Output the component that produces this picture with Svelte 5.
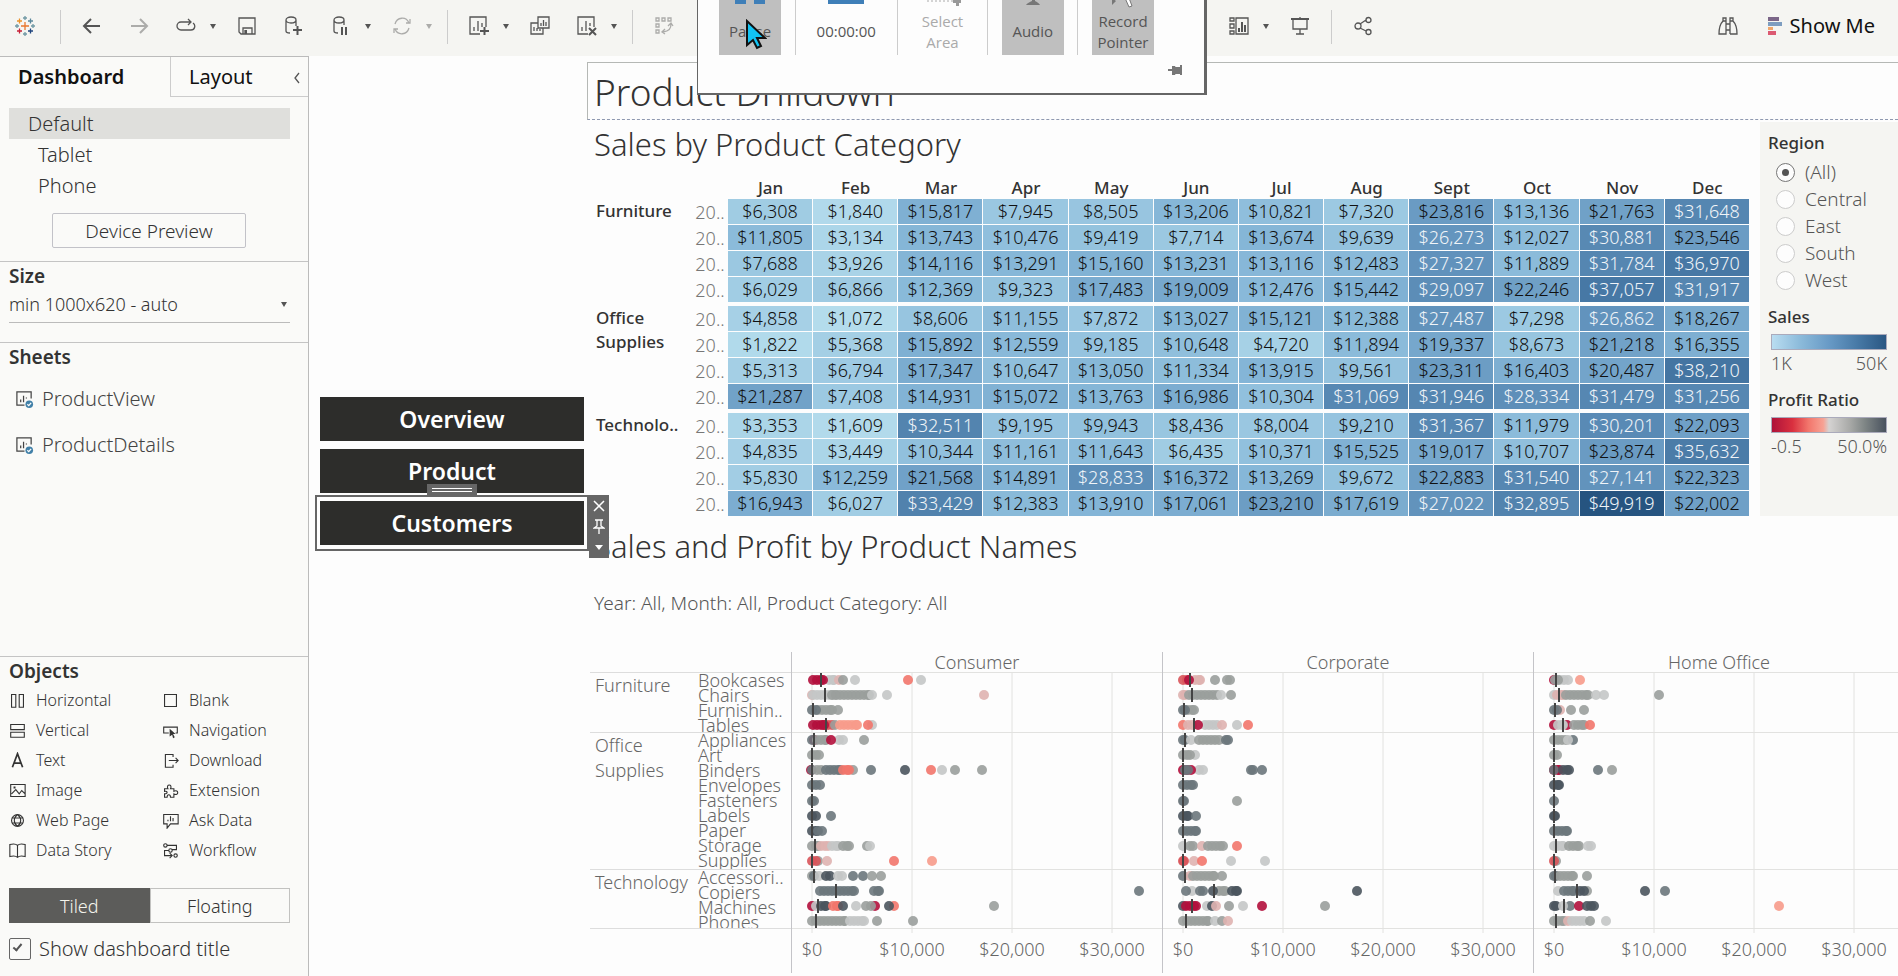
<script lang="ts">
  type Shape = { d: string; kind?: "solid" | "heavy"; fill?: string };
  type Tone = "crimson" | "red" | "coral" | "salmon" | "pink" | "silver" | "gray" | "slate" | "dark";
  type Run = [Tone, number, number?];
  interface Row { median: number; runs: Run[] }

  const icons: Record<string, Shape[]> = {
    logo: [
      { d: "M10 6v8M6 10h8", fill: "#e8762d" },
      { d: "M4.500 2.500v5M2 5h5", fill: "#eb9129" },
      { d: "M15.500 2.500v5M13 5h5", fill: "#5b879b" },
      { d: "M4.500 12.500v5M2 15h5", fill: "#c72037" },
      { d: "M15.500 12.500v5M13 15h5", fill: "#1f447e" },
      { d: "M10 0v4M8 2h4M10 16v4M8 18h4M0 10h4M2 8v4M16 10h4M18 8v4", fill: "#7099a5" },
    ],
    back: [{ d: "M9 3L2 10l7 7M2 10h16", kind: "heavy" }],
    forward: [{ d: "M11 3l7 7-7 7M18 10H2", kind: "heavy" }],
    redo: [{ d: "M15 14H5a4 4 0 0 1 0-8h10M12 3l3 3-3 3M17 7c3 2 2 7-2 7" }],
    save: [{ d: "M2 2h16v16H4l-2-2zM6 18v-6h9v6M8 14v4" }, { d: "M8 14h2v4H8z", kind: "solid" }],
    dbAdd: [{ d: "M2 4c0-4 10-4 10 0s-10 4-10 0v11c0 2 2 2 4 2M12 4v6" }, { d: "M9 14h9M13.500 10v9", kind: "heavy" }],
    dbPause: [{ d: "M3 4c0-4 10-4 10 0s-10 4-10 0v11c0 2 2 2 4 2M13 4v5" }, { d: "M10 11h2v8h-2zM14 11h2v8h-2z", kind: "solid" }],
    refresh: [{ d: "M3 8c2-7 11-8 14-1M17 12c-2 7-11 8-14 1M14 7h4V3M6 13H2v4" }],
    sheetAdd: [{ d: "M11 18H1V1h16v10M5 15v-4M9 15V5M13 11V7" }, { d: "M11 15h9M15.500 11v8", kind: "heavy" }],
    sheetCopy: [{ d: "M8 1h11v11H8zM11 10V7M13.500 10V4M16 10V6M8 7H1v11h12v-6M4 15v-4M7 15v-3M10 15v-2" }],
    sheetClear: [{ d: "M11 18H1V1h16v10M5 15v-4M9 15V5M13 10V7" }, { d: "M12 12l7 7M19 12l-7 7", kind: "heavy" }],
    swap: [{ d: "M2 2h3v3H2zM8 2h3v3H8zM14 2h3v3h-3zM2 8h3v3H2zM2 14h3v3H2zM17 8c0 5-2 7-8 8M14 10l3-3 2 3M11 13l-3 3 3 2" }],
    cards: [{ d: "M1 2h4v3H1zM1 8h4v4H1zM1 15h4v3H1zM7 2h12v16H7z" }, { d: "M9 12h2v4H9zM12 6h2v10h-2zM15 9h2v7h-2z", kind: "solid" }],
    present: [{ d: "M1 3h18M3 3v10h14V3M10 13v5M6 18h8M10 1v2" }, { d: "M1 2h18v2H1z", kind: "solid" }],
    share: [{ d: "M13 4a2.500 2.500 0 1 0 5 0a2.500 2.500 0 1 0-5 0M2 10a3 3 0 1 0 6 0a3 3 0 1 0-6 0M13 16a2.500 2.500 0 1 0 5 0a2.500 2.500 0 1 0-5 0M7 8l6-4M7 12l6 3" }],
    find: [{ d: "M5 5V2h3v16H1c0-5 1-10 4-13M12 18V2h3v3c3 3 4 8 4 13h-7M8 8h4M8 14h4M5 5h3M12 5h3" }],
    sheet: [{ d: "M10 16H2V2h15v7M6 13v-3M9 13V6M12 9V8" }, { d: "M11 15a4 4 0 1 0 8 0a4 4 0 1 0-8 0", kind: "solid", fill: "#4180a8" }, { d: "M13 15l1.500 1.500 2.500-3", fill: "#fff" }],
    Horizontal: [{ d: "M3 3h5v15H3zM12 3h5v15h-5z" }],
    Vertical: [{ d: "M2 3h16v6H2zM2 12h16v6H2z" }],
    Text: [{ d: "M4 18L10 2l6 16M6 13h8", kind: "heavy" }],
    Image: [{ d: "M2 3h17v14H2zM3 14l5-5 4 5 3-4 4 4M6 6h1v1H6z" }],
    "Web Page": [{ d: "M3 10a7 7 0 1 0 14 0a7 7 0 1 0-14 0M3 7h14M3 13h14M10 3c-5 4-5 10 0 14M10 3c5 4 5 10 0 14" }],
    "Data Story": [{ d: "M1 3c4-1 7-1 9 1 2-2 5-2 9-1v14c-4-1-7-1-9 1-2-2-5-2-9-1zM10 4v14" }],
    Blank: [{ d: "M3 3h14v14H3z" }],
    Navigation: [{ d: "M8 13H2V6h16v7h-2" }, { d: "M9 8l7 6-3 0 2 4-2 1-1-4-3 2z", kind: "solid" }],
    Download: [{ d: "M13 6V3H4v15h9v-3M8 10h11M16 7l3 3-3 3" }],
    Extension: [{ d: "M3 8h4c-3-6 6-6 3 0h4v3c6-3 6 6 0 3v4h-4c0-4-4-4-4 0H3v-4c4 0 4-4 0-3z" }],
    "Ask Data": [{ d: "M2 3h17v11h-9l-4 5v-5H2zM7 11V9M10 11V5M13 11V7" }],
    Workflow: [{ d: "M2 4a2 2 0 1 0 4 0a2 2 0 1 0-4 0M14 16a2 2 0 1 0 4 0a2 2 0 1 0-4 0M6 4h11v5h-5M8 10a2 2 0 1 0 4 0a2 2 0 1 0-4 0M8 10H3v6h8M9 13l3 3-3 3" }],
  };

  const toolbarStart = [
    { name: "back", label: "Undo" },
    { name: "forward", label: "Redo", off: true },
    { name: "redo", label: "Replay", menu: true },
    { name: "save", label: "Save" },
    { name: "dbAdd", label: "New Data Source" },
    { name: "dbPause", label: "Pause Auto Updates", menu: true },
    { name: "refresh", label: "Run Update", menu: true, off: true },
    { name: "" },
    { name: "sheetAdd", label: "New Worksheet", menu: true },
    { name: "sheetCopy", label: "Duplicate" },
    { name: "sheetClear", label: "Clear Sheet", menu: true },
    { name: "" },
    { name: "swap", label: "Swap Rows and Columns", off: true },
  ];
  const toolbarMiddle = [
    { name: "cards", label: "Show/Hide Cards", menu: true },
    { name: "present", label: "Presentation Mode" },
    { name: "" },
    { name: "share", label: "Share" },
  ];

  const devices = ["Default", "Tablet", "Phone"];
  const sheets = ["ProductView", "ProductDetails"];
  const objects = [
    "Horizontal", "Blank", "Vertical", "Navigation", "Text", "Download",
    "Image", "Extension", "Web Page", "Ask Data", "Data Story", "Workflow",
  ];
  const regions = ["(All)", "Central", "East", "South", "West"];
  const months = ["Jan", "Feb", "Mar", "Apr", "May", "Jun", "Jul", "Aug", "Sept", "Oct", "Nov", "Dec"];

  const sales = [
    {
      category: "Furniture",
      years: [
        [6308, 1840, 15817, 7945, 8505, 13206, 10821, 7320, 23816, 13136, 21763, 31648],
        [11805, 3134, 13743, 10476, 9419, 7714, 13674, 9639, 26273, 12027, 30881, 23546],
        [7688, 3926, 14116, 13291, 15160, 13231, 13116, 12483, 27327, 11889, 31784, 36970],
        [6029, 6866, 12369, 9323, 17483, 19009, 12476, 15442, 29097, 22246, 37057, 31917],
      ],
    },
    {
      category: "Office Supplies",
      years: [
        [4858, 1072, 8606, 11155, 7872, 13027, 15121, 12388, 27487, 7298, 26862, 18267],
        [1822, 5368, 15892, 12559, 9185, 10648, 4720, 11894, 19337, 8673, 21218, 16355],
        [5313, 6794, 17347, 10647, 13050, 11334, 13915, 9561, 23311, 16403, 20487, 38210],
        [21287, 7408, 14931, 15072, 13763, 16986, 10304, 31069, 31946, 28334, 31479, 31256],
      ],
    },
    {
      category: "Technolo..",
      years: [
        [3353, 1609, 32511, 9195, 9943, 8436, 8004, 9210, 31367, 11979, 30201, 22093],
        [4835, 3449, 10344, 11161, 11643, 6435, 10371, 15525, 19017, 10707, 23874, 35632],
        [5830, 12259, 21568, 14891, 28833, 16372, 13269, 9672, 22883, 31540, 27141, 22323],
        [16943, 6027, 33429, 12383, 13910, 17061, 23210, 17619, 27022, 32895, 49919, 22002],
      ],
    },
  ];

  const ramp = [[180, 220, 236], [134, 183, 216], [102, 151, 192], [69, 118, 163], [38, 84, 128]];

  function shade(value: number) {
    const t = Math.min(Math.max((value - 1000) / 49000, 0), 0.999) * (ramp.length - 1);
    const i = Math.floor(t);
    const mix = ramp[i].map((c, k) => Math.round(c + (ramp[i + 1][k] - c) * (t - i)));
    return `rgb(${mix.join(",")})`;
  }

  const money = (v: number) => "$" + v.toLocaleString("en-US");

  const productGroups = [
    { category: "Furniture", items: ["Bookcases", "Chairs", "Furnishin..", "Tables"] },
    {
      category: "Office Supplies",
      items: ["Appliances", "Art", "Binders", "Envelopes", "Fasteners", "Labels", "Paper", "Storage", "Supplies"],
    },
    { category: "Technology", items: ["Accessori..", "Copiers", "Machines", "Phones"] },
  ];

  const tones: Record<Tone, string> = {
    crimson: "#b3103c",
    red: "#d9545a",
    coral: "#f2766c",
    salmon: "#f79b8b",
    pink: "#dfb3b0",
    silver: "#c4c6c6",
    gray: "#9a9f9c",
    slate: "#6b777c",
    dark: "#4b555e",
  };

  // runs are in hundreds of dollars: tone, first mark, last mark
  const segments: { name: string; rows: Row[] }[] = [
    {
      name: "Consumer",
      rows: [
        { median: 9, runs: [["silver", 17, 22], ["pink", 27], ["gray", 31], ["silver", 43], ["coral", 96], ["silver", 109], ["crimson", 1, 11]] },
        { median: 13, runs: [["pink", 0], ["silver", 1, 24], ["gray", 20, 57], ["silver", 60], ["silver", 75], ["pink", 172]] },
        { median: 1, runs: [["gray", 6, 20], ["gray", 26], ["slate", 0, 4]] },
        { median: 14, runs: [["red", 12, 20], ["gray", 23], ["salmon", 28, 45], ["silver", 60], ["coral", 56], ["crimson", 1, 12]] },
        { median: 2, runs: [["crimson", 2], ["slate", 0], ["gray", 5, 14], ["silver", 27, 31], ["crimson", 19], ["gray", 52]] },
        { median: 0, runs: [["gray", 0, 7]] },
        { median: 0, runs: [["crimson", -1], ["slate", 0], ["gray", 5, 9], ["slate", 14, 28], ["gray", 41], ["coral", 31, 37], ["slate", 59], ["dark", 93], ["coral", 119], ["silver", 130], ["gray", 143], ["gray", 170]] },
        { median: 0, runs: [["slate", 0, 8]] },
        { median: 0, runs: [["slate", 0, 2]] },
        { median: 0, runs: [["dark", 0, 4], ["slate", 19]] },
        { median: 0, runs: [["dark", 0, 5], ["slate", 6, 10]] },
        { median: 3, runs: [["gray", 0, 6], ["pink", 9, 16], ["silver", 20, 26], ["gray", 31, 37], ["gray", 55], ["silver", 58]] },
        { median: 0, runs: [["gray", 6], ["pink", 15], ["red", 0, 4], ["coral", 82], ["salmon", 120]] },
        { median: 2, runs: [["gray", 0], ["slate", 2], ["silver", 7], ["dark", 14, 18], ["silver", 26, 30], ["slate", 41], ["slate", 51], ["gray", 60], ["gray", 69]] },
        { median: 24, runs: [["slate", 8, 42], ["slate", 62, 67], ["slate", 327]] },
        { median: 6, runs: [["crimson", 0], ["silver", 4], ["dark", 9, 14], ["coral", 21, 26], ["dark", 31], ["silver", 44], ["gray", 54], ["crimson", 63], ["gray", 59], ["coral", 82], ["dark", 77], ["gray", 182]] },
        { median: 4, runs: [["gray", 0, 33], ["silver", 38, 52], ["gray", 65], ["gray", 101]] },
      ],
    },
    {
      name: "Corporate",
      rows: [
        { median: 7, runs: [["red", 0, 4], ["pink", 12, 17], ["crimson", 6], ["gray", 32], ["gray", 44, 47]] },
        { median: 9, runs: [["pink", 0, 2], ["gray", 6, 34], ["silver", 38], ["gray", 48]] },
        { median: 1, runs: [["gray", 5, 11], ["slate", 0, 2]] },
        { median: 11, runs: [["coral", 0], ["pink", 5, 9], ["silver", 22, 34], ["pink", 39], ["crimson", 15], ["silver", 54], ["coral", 65]] },
        { median: 2, runs: [["slate", 0, 2], ["silver", 8], ["gray", 16, 36], ["slate", 43, 45]] },
        { median: 0, runs: [["silver", 12], ["gray", 0, 7]] },
        { median: 0, runs: [["silver", 16, 20], ["crimson", 0, 8], ["slate", 2, 5], ["slate", 68, 70], ["slate", 79]] },
        { median: 0, runs: [["slate", 0, 10]] },
        { median: 0, runs: [["slate", 0, 1], ["gray", 54]] },
        { median: 0, runs: [["dark", 0, 5], ["slate", 13]] },
        { median: 0, runs: [["slate", 0, 13]] },
        { median: 2, runs: [["silver", 0], ["gray", 7, 10], ["pink", 19], ["gray", 25, 40], ["coral", 54]] },
        { median: 0, runs: [["red", 0, 1], ["pink", 11], ["coral", 19], ["silver", 48], ["silver", 82]] },
        { median: 2, runs: [["slate", 0], ["pink", 7], ["gray", 10, 31], ["gray", 39]] },
        { median: 31, runs: [["silver", 9], ["slate", 3], ["slate", 17, 20], ["gray", 36, 42], ["dark", 30], ["dark", 49, 54], ["dark", 174]] },
        { median: 9, runs: [["dark", 0], ["crimson", 3, 13], ["silver", 24], ["dark", 29], ["pink", 33], ["gray", 46], ["silver", 60], ["crimson", 79], ["gray", 142]] },
        { median: 3, runs: [["gray", 0, 25], ["silver", 32], ["gray", 39], ["pink", 45]] },
      ],
    },
    {
      name: "Home Office",
      rows: [
        { median: 2, runs: [["crimson", 0], ["silver", 6, 14], ["gray", 1, 4], ["salmon", 26]] },
        { median: 5, runs: [["silver", 0], ["pink", 3, 9], ["gray", 12, 34], ["silver", 42], ["silver", 50], ["gray", 105]] },
        { median: 1, runs: [["pink", 6], ["slate", 0, 3], ["gray", 17], ["gray", 30]] },
        { median: 9, runs: [["crimson", 0], ["crimson", 13], ["silver", 4, 9], ["gray", 20, 30], ["coral", 36]] },
        { median: 0, runs: [["gray", 0, 12], ["slate", 19], ["silver", 14]] },
        { median: 0, runs: [["gray", 0, 3]] },
        { median: 0, runs: [["crimson", 0, 5], ["slate", 0], ["dark", 9, 15], ["slate", 44], ["gray", 58]] },
        { median: 0, runs: [["dark", 0, 5]] },
        { median: 0, runs: [["slate", 0]] },
        { median: 0, runs: [["dark", 0, 1]] },
        { median: 0, runs: [["slate", 0, 13]] },
        { median: 2, runs: [["silver", 0, 9], ["gray", 15, 25], ["silver", 34, 37]] },
        { median: 0, runs: [["gray", 2], ["red", 0]] },
        { median: 1, runs: [["slate", 0, 2], ["gray", 6, 19], ["gray", 33]] },
        { median: 23, runs: [["silver", 4], ["slate", 10, 20], ["gray", 33], ["dark", 26, 30], ["dark", 91], ["slate", 111]] },
        { median: 10, runs: [["dark", 0, 2], ["slate", 16], ["silver", 9], ["crimson", 25], ["dark", 33, 40], ["salmon", 225]] },
        { median: 2, runs: [["gray", 0, 10], ["pink", 14], ["silver", 18, 30], ["gray", 36], ["silver", 52]] },
      ],
    },
  ];

  const zeroX = 20;
  const rowY = (i: number) => 8 + i * 15 + (i > 7 ? 1 : 0);

  function marks(runs: Run[]) {
    const out: { x: number; fill: string }[] = [];
    for (const [tone, from, to = from] of runs) {
      for (let x = from; x < to; x += 4) out.push({ x, fill: tones[tone] });
      out.push({ x: to, fill: tones[tone] });
    }
    return out;
  }
</script>

{#snippet icon(name: string)}
  <svg class="icon" viewBox="0 0 20 20" aria-hidden="true">
    {#each icons[name] as s}
      {#if s.kind === "solid"}
        <path d={s.d} fill={s.fill ?? "currentColor"} />
      {:else}
        <path d={s.d} fill="none" stroke={s.fill ?? "currentColor"} stroke-width={s.kind === "heavy" ? 2 : 1.3} />
      {/if}
    {/each}
  </svg>
{/snippet}

{#snippet tools(items: { name: string; label?: string; menu?: boolean; off?: boolean }[])}
  {#each items as item}
    {#if item.name}
      <div class="tool" class:off={item.off}>
        <button class="tool-btn" aria-label={item.label}>{@render icon(item.name)}</button>
        {#if item.menu}
          <button class="tool-caret" aria-label="{item.label} options"><span class="caret"></span></button>
        {/if}
      </div>
    {:else}
      <span class="tool-sep"></span>
    {/if}
  {/each}
{/snippet}

<div class="app">
  <header class="toolbar">
    <button class="tool-btn logo" aria-label="Start page">{@render icon("logo")}</button>
    <span class="tool-sep"></span>
    {@render tools(toolbarStart)}
    <span class="tool-room"></span>
    {@render tools(toolbarMiddle)}
    <div class="toolbar-end">
      <button class="tool-btn" aria-label="Find">{@render icon("find")}</button>
      <button class="show-me">
        <svg width="14" height="18" viewBox="0 0 14 18" aria-hidden="true">
          <path d="M0 0h11v4H0z" fill="#7b6688" />
          <path d="M0 5h14v4H0z" fill="#7d9dc0" />
          <path d="M0 10h5v3H0z" fill="#efa66b" />
          <path d="M0 14h8v4H0z" fill="#dc5a72" />
        </svg>
        Show Me
      </button>
    </div>
  </header>

  <div class="workspace">
    <aside class="sidebar">
      <div class="tabs">
        <button class="tab active">Dashboard</button>
        <button class="tab">Layout</button>
        <button class="collapse" aria-label="Collapse pane">
          <svg width="8" height="12" viewBox="0 0 8 12"><path d="M6 1L2 6l4 5" fill="none" stroke="#555" stroke-width="1.300" /></svg>
        </button>
      </div>

      <ul class="devices">
        {#each devices as device, i}
          <li class:selected={i === 0}>{device}</li>
        {/each}
      </ul>
      <button class="preview">Device Preview</button>

      <section class="pane size-pane">
        <h2><label for="size">Size</label></h2>
        <div class="size-box">
          <select id="size"><option>min 1000x620 - auto</option></select>
          <span class="caret"></span>
        </div>
      </section>

      <section class="pane">
        <h2>Sheets</h2>
        <ul class="sheets">
          {#each sheets as sheet}
            <li>{@render icon("sheet")}{sheet}</li>
          {/each}
        </ul>
      </section>

      <section class="pane objects-pane">
        <h2>Objects</h2>
        <ul class="objects">
          {#each objects as object}
            <li>{@render icon(object)}{object}</li>
          {/each}
        </ul>
        <div class="segmented">
          <button class="on">Tiled</button>
          <button>Floating</button>
        </div>
        <label class="show-title"><input type="checkbox" checked />Show dashboard title</label>
      </section>
    </aside>

    <main class="canvas">
      <nav class="nav">
        <button class="nav-btn">Overview</button>
        <button class="nav-btn">Product</button>
        <div class="selected-zone">
          <button class="nav-btn">Customers</button>
          <span class="grip"></span>
          <div class="zone-tools">
            <button aria-label="Remove from dashboard">
              <svg width="12" height="12" viewBox="0 0 12 12"><path d="M1 1l10 10M11 1L1 11" stroke="#fff" stroke-width="1.500" /></svg>
            </button>
            <button aria-label="Fix size">
              <svg width="12" height="16" viewBox="0 0 12 16"><path d="M2 1h8M4 1v6L1 9h10L8 7V1M6 9v6" fill="none" stroke="#fff" stroke-width="1.300" /></svg>
            </button>
            <button aria-label="More options"><span class="caret light"></span></button>
          </div>
        </div>
      </nav>

      <div class="dashboard">
        <h1>Product Drilldown</h1>

        <div class="top-row">
          <section class="sheet">
            <h3>Sales by Product Category</h3>
            <table>
              <colgroup>
                <col class="col-category" />
                <col class="col-year" />
                {#each months as _}<col />{/each}
              </colgroup>
              <thead>
                <tr>
                  <td colspan="2"></td>
                  {#each months as month}<th scope="col">{month}</th>{/each}
                </tr>
              </thead>
              {#each sales as group}
                <tbody>
                  {#each group.years as year, i}
                    <tr>
                      {#if i === 0}<th class="category" scope="rowgroup" rowspan="4">{group.category}</th>{/if}
                      <td class="year">20..</td>
                      {#each year as value}
                        <td class="value" class:inverse={value > 25000} style="background-color: {shade(value)}">{money(value)}</td>
                      {/each}
                    </tr>
                  {/each}
                </tbody>
              {/each}
            </table>
          </section>

          <aside class="legend">
            <fieldset>
              <legend>Region</legend>
              {#each regions as region, i}
                <label><input type="radio" name="region" value={region} checked={i === 0} />{region}</label>
              {/each}
            </fieldset>
            <h4>Sales</h4>
            <div class="ramp ramp--sales"></div>
            <div class="ends"><span>1K</span><span>50K</span></div>
            <h4>Profit Ratio</h4>
            <div class="ramp ramp--profit"></div>
            <div class="ends"><span>-0.5</span><span>50.0%</span></div>
          </aside>
        </div>

        <section class="sheet details">
          <h3>Sales and Profit by Product Names</h3>
          <p>Year: All, Month: All, Product Category: All</p>
        </section>

        <div class="chart">
          <div class="row-labels">
            {#each productGroups as group}
              <div class="group">
                <div class="group-name">{group.category}</div>
                <ul>
                  {#each group.items as item}<li>{item}</li>{/each}
                </ul>
              </div>
            {/each}
          </div>
          {#each segments as segment}
            <div class="panel">
              <div class="panel-name">{segment.name}</div>
              <svg class="plot" width="370" height="301" role="img" aria-label="Sales by product, {segment.name}">
                {#each [0, 60, 197, 256] as y}
                  <line class="rule" x1="0" x2="370" y1={y + 0.5} y2={y + 0.5} />
                {/each}
                {#each [0, 1, 2, 3] as n}
                  <line class="rule" x1={zeroX + n * 100} x2={zeroX + n * 100} y1="0" y2="261" />
                  <text x={zeroX + n * 100} y="284">{money(n * 10000)}</text>
                {/each}
                {#each segment.rows as row, i}
                  {#each marks(row.runs) as mark}
                    <circle cx={zeroX + mark.x} cy={rowY(i)} r="5" fill={mark.fill} />
                  {/each}
                  <path class="median" d="M{zeroX + row.median} {rowY(i) - 7}v14" />
                {/each}
              </svg>
            </div>
          {/each}
        </div>
      </div>
    </main>
  </div>

  <div class="recorder">
    <div class="recorder-row">
      <button class="rec on">
        <svg width="32" height="20" viewBox="0 0 32 20"><path d="M1 0h11v18H1zM20 0h11v18H20z" fill="#3f7fb8" /></svg>
        Pause
      </button>
      <span class="rec-sep"></span>
      <div class="rec timer">
        <svg width="36" height="20" viewBox="0 0 36 20"><path d="M0 0h36v18H0z" fill="#3f7fb8" /></svg>
        00:00:00
      </div>
      <span class="rec-sep"></span>
      <button class="rec off">
        <svg width="36" height="20" viewBox="0 0 36 20"><path d="M2 15h26" stroke="#aaa" stroke-dasharray="2 2" /><path d="M28 14h8v3h-2v3h-3v-3h-3z" fill="#999" /></svg>
        Select<br />Area
      </button>
      <span class="rec-sep"></span>
      <button class="rec on">
        <svg width="20" height="20" viewBox="0 0 20 20"><path d="M9 10h3v5c2 1 4 2 5 4H3c1-2 4-3 6-4z" fill="#777" /></svg>
        Audio
      </button>
      <span class="rec-sep"></span>
      <button class="rec on">
        <svg width="28" height="22" viewBox="0 0 28 22"><path d="M13 9l3 3 4 9 3-1-3-8h5L13 2z" fill="#fff" stroke="#777" /><path d="M3 12v7l4-4" fill="#777" /></svg>
        Record<br />Pointer
      </button>
    </div>
    <button class="pin" aria-label="Pin">
      <svg width="14" height="12" viewBox="0 0 14 12"><path d="M0 5h4V2h3l1 2h4V1h2v10h-2V9H8l-1 2H4V7H0z" fill="#777" /><path d="M7 3h6v7H7z" fill="#777" /></svg>
    </button>
    <svg class="pointer" width="22" height="31" viewBox="0 0 22 31" aria-hidden="true">
      <path d="M2 2v24l6-5 4 8 4-2-4-8h8z" fill="#12c4f4" stroke="#111" stroke-width="2" />
    </svg>
  </div>
</div>

<style>
  :global(body) {
    margin: 0;
    background: #fdfdfd;
  }
  .app {
    position: relative;
    display: flex;
    flex-direction: column;
    min-height: 100vh;
    overflow: hidden;
    font-family: "Noto Sans", "Open Sans", sans-serif;
    font-weight: 300;
    font-size: 18px;
    color: #333;
  }
  button, select, input {
    font: inherit;
    color: inherit;
    margin: 0;
  }
  button {
    padding: 0;
    border: 0;
    background: none;
  }
  ul {
    list-style: none;
    margin: 0;
    padding: 0;
  }
  .icon {
    width: 20px;
    height: 20px;
    flex-shrink: 0;
  }
  .caret {
    display: block;
    width: 0;
    height: 0;
    border: 3px solid transparent;
    border-top: 5px solid #555;
    border-bottom: 0;
  }
  .caret.light {
    border-width: 5px 4px 0;
    border-top-color: #fff;
  }

  .toolbar {
    display: flex;
    align-items: center;
    gap: 7px;
    height: 56px;
    padding: 0 23px 12px 1px;
    box-sizing: border-box;
    background: #f5f5f2;
    color: #555;
  }
  .tool {
    display: flex;
    align-items: center;
  }
  .tool.off {
    opacity: 0.45;
  }
  .tool-btn {
    display: flex;
    justify-content: center;
    width: 40px;
    padding-top: 8px;
  }
  .tool-btn.logo {
    width: 48px;
  }
  .tool-caret {
    display: flex;
    justify-content: center;
    width: 14px;
    padding-top: 8px;
  }
  .tool-sep {
    width: 1px;
    height: 34px;
    margin: 10px 4px 0;
    background: #ccc;
  }
  .tool-room {
    width: 521px;
    flex-shrink: 0;
  }
  .toolbar-end {
    display: flex;
    align-items: center;
    gap: 20px;
    margin-left: auto;
  }
  .show-me {
    display: flex;
    align-items: center;
    gap: 8px;
    padding-top: 8px;
    font-size: 20px;
    line-height: 24px;
    font-weight: 400;
    color: #111;
    white-space: nowrap;
  }

  .workspace {
    display: flex;
    flex: 1;
  }
  .sidebar {
    display: flex;
    flex-direction: column;
    width: 308px;
    flex-shrink: 0;
    border-top: 1px solid #bbb;
    border-right: 1px solid #bbb;
    background: #fafaf8;
  }
  .tabs {
    display: flex;
    height: 40px;
    font-size: 20px;
    color: #111;
  }
  .tab {
    flex: 1;
    padding-left: 18px;
    text-align: left;
    border-left: 1px solid #ccc;
    border-bottom: 1px solid #ccc;
    font-weight: 400;
  }
  .tab.active {
    flex: 0 0 170px;
    padding-left: 17px;
    border-color: transparent;
    font-weight: 600;
  }
  .collapse {
    width: 22px;
    border-bottom: 1px solid #ccc;
  }
  .devices {
    margin: 11px 18px 12px 9px;
    font-size: 20px;
    line-height: 31px;
  }
  .devices li {
    padding-left: 29px;
  }
  .devices li.selected {
    padding-left: 19px;
    background: #dfdfdc;
  }
  .preview {
    width: 194px;
    height: 35px;
    margin: 0 0 13px 52px;
    border: 1px solid #c2c2c8;
    border-radius: 2px;
    font-size: 19px;
    line-height: 32px;
  }
  .pane {
    padding: 0 18px 0 9px;
    border-top: 1px solid #c4c4c4;
  }
  .size-pane {
    padding-bottom: 19px;
  }
  h2 {
    margin: 0;
    font-size: 19px;
    line-height: 28px;
    font-weight: 600;
  }
  .size-box {
    display: flex;
    align-items: center;
    padding: 0 3px 4px 0;
    border-bottom: 1px solid #bbb;
  }
  .size-box select {
    flex: 1;
    height: 28px;
    padding: 0;
    border: 0;
    appearance: none;
    background: none;
  }
  .sheets {
    margin-top: 5px;
    padding-left: 6px;
    line-height: 46px;
    font-size: 20px;
  }
  .sheets li {
    display: flex;
    align-items: center;
    gap: 8px;
    color: #444;
  }
  .sheets .icon {
    width: 19px;
    height: 19px;
  }
  .objects-pane {
    margin-top: auto;
    padding-bottom: 14px;
  }
  .objects {
    display: grid;
    grid-template-columns: 153px 1fr;
    padding-bottom: 23px;
    font-size: 16px;
    line-height: 30px;
  }
  .objects li {
    display: flex;
    align-items: center;
    gap: 10px;
  }
  .objects .icon {
    width: 17px;
    height: 17px;
  }
  .segmented {
    display: flex;
    height: 35px;
    margin-bottom: 13px;
  }
  .segmented button {
    flex: 1;
    box-sizing: border-box;
    border: 1px solid #c2c2c0;
  }
  .segmented .on {
    border-color: #5c5c5a;
    background: #5c5c5a;
    color: #f4f4ec;
  }
  .show-title {
    display: flex;
    align-items: center;
    gap: 8px;
    font-size: 20px;
    line-height: 26px;
  }
  .show-title input {
    display: grid;
    place-items: center;
    appearance: none;
    width: 22px;
    height: 22px;
    box-sizing: border-box;
    border: 1px solid #666;
    border-radius: 2px;
  }
  .show-title input:checked::before {
    content: "";
    width: 3px;
    height: 7px;
    margin: 0 5px 5px 0;
    border: solid #555;
    border-width: 0 2px 2px 0;
    transform: rotate(40deg);
  }

  .canvas {
    display: flex;
    flex: 1;
    min-width: 0;
  }
  .nav {
    display: flex;
    flex-direction: column;
    gap: 8px;
    width: 264px;
    flex-shrink: 0;
    padding: 341px 3px 0 11px;
  }
  .nav-btn {
    width: 100%;
    height: 44px;
    background: #2d2d2b;
    color: #fff;
    font-size: 23px;
    line-height: 42px;
    font-weight: 600;
  }
  .selected-zone {
    position: relative;
    z-index: 1;
  }
  .selected-zone::before {
    content: "";
    position: absolute;
    inset: -6px -5px;
    border: 2px solid #666;
    pointer-events: none;
  }
  .grip {
    position: absolute;
    left: 50%;
    top: -17px;
    width: 40px;
    height: 3px;
    padding: 4px 5px;
    margin-left: -25px;
    background: linear-gradient(#fff 1px, #666 1px 3px, #fff 3px) content-box, #666;
  }
  .grip::after {
    content: "";
    display: block;
    height: 1px;
    margin-top: 3px;
    background: #fff;
  }
  .zone-tools {
    position: absolute;
    left: 100%;
    top: -6px;
    display: flex;
    flex-direction: column;
    width: 20px;
    margin-left: 5px;
    background: #666;
  }
  .zone-tools button {
    display: flex;
    align-items: center;
    justify-content: center;
    height: 21px;
  }

  .dashboard {
    flex: 1;
    min-width: 0;
    padding-top: 6px;
    overflow: hidden;
  }
  h1 {
    margin: 0;
    height: 56px;
    padding-left: 6px;
    border: 1px solid #b5b8b5;
    border-right: 0;
    border-bottom: 1px dashed #8f99b0;
    font-size: 37px;
    line-height: 58px;
    font-weight: 300;
  }
  h3 {
    margin: 0;
    font-size: 31px;
    line-height: 44px;
    font-weight: 300;
  }
  .top-row {
    display: flex;
    gap: 10px;
    padding-top: 2px;
  }
  .sheet {
    padding-left: 7px;
  }
  .top-row .sheet {
    flex: 1;
  }
  table {
    width: 100%;
    margin-top: 11px;
    table-layout: fixed;
    border-spacing: 0;
    text-align: center;
    line-height: 25px;
  }
  .col-category {
    width: 98px;
  }
  .col-year {
    width: 36px;
  }
  th, td {
    padding: 0;
    white-space: nowrap;
  }
  th {
    font-size: 17px;
    font-weight: 500;
  }
  thead th {
    line-height: 22px;
  }
  .category {
    padding-left: 2px;
    text-align: left;
    vertical-align: top;
    white-space: normal;
    line-height: 24px;
  }
  .year {
    color: #777;
  }
  .value {
    border: solid #fdfdfd;
    border-width: 0 1px 1px 0;
    color: #111;
  }
  .value.inverse {
    color: #f0f4f8;
  }
  tbody + tbody tr:first-child > * {
    border-top: 3px solid #fdfdfd;
  }

  .legend {
    width: 130px;
    height: 394px;
    padding-left: 8px;
    flex-shrink: 0;
    background: #f5f5f2;
    color: #555;
  }
  fieldset {
    margin: 0;
    padding: 7px 0 0;
    border: 0;
  }
  legend, h4 {
    display: block;
    margin: 0;
    padding: 0;
    font-size: 17px;
    line-height: 28px;
    font-weight: 500;
    color: #333;
  }
  legend {
    float: left;
    width: 100%;
    margin-bottom: 2px;
  }
  fieldset label {
    display: flex;
    align-items: center;
    gap: 10px;
    clear: both;
    padding-left: 8px;
    font-size: 19px;
    line-height: 27px;
  }
  fieldset input {
    display: grid;
    place-items: center;
    appearance: none;
    width: 19px;
    height: 19px;
    box-sizing: border-box;
    border: 1px solid #ccc;
    border-radius: 50%;
    background: #fdfdfd;
  }
  fieldset input:checked {
    border-color: #777;
  }
  fieldset input:checked::before {
    content: "";
    width: 7px;
    height: 7px;
    border-radius: 50%;
    background: #555;
  }
  h4 {
    padding-top: 9px;
  }
  .ramp {
    height: 14px;
    margin: 3px 11px 0 3px;
    border: 1px solid #aab;
  }
  .ramp--sales {
    background: linear-gradient(90deg, #b9ddf1, #8bbada, #689ac6, #4779a6, #2a5783);
  }
  .ramp--profit {
    background: linear-gradient(90deg, #ae123a, #d9303f 18%, #f2766c 32%, #f7a294 45%, #d5d3d2 50%, #a9aaa8 68%, #7d8484 82%, #49525e);
  }
  .ends {
    display: flex;
    justify-content: space-between;
    margin: 0 11px 0 3px;
    line-height: 27px;
  }

  .details {
    padding-top: 7px;
  }
  p {
    margin: 23px 0 0;
    font-size: 19px;
    line-height: 24px;
    color: #555;
  }
  .chart {
    display: flex;
    margin-top: 37px;
    padding-left: 3px;
    color: #666;
  }
  .row-labels {
    width: 201px;
    flex-shrink: 0;
    padding-top: 20px;
  }
  .group {
    display: flex;
    height: 59px;
    border-top: 1px solid #ddd;
    overflow: hidden;
  }
  .group:nth-child(2) {
    height: 136px;
  }
  .group:last-child {
    height: 58px;
    border-bottom: 1px solid #ddd;
  }
  .group-name {
    width: 103px;
    padding-left: 5px;
    line-height: 25px;
  }
  .group li {
    line-height: 15px;
  }
  .panel {
    width: 370px;
    flex-shrink: 0;
    border-left: 1px solid #c4c4c8;
  }
  .panel-name {
    line-height: 20px;
    text-align: center;
  }
  .plot {
    display: block;
  }
  .rule {
    stroke: #e2e2e0;
  }
  .plot text {
    fill: #666;
    text-anchor: middle;
  }
  .plot circle {
    opacity: 0.9;
  }
  .median {
    stroke: #444;
    stroke-width: 2;
  }

  .recorder {
    position: absolute;
    left: 697px;
    top: 0;
    width: 506px;
    height: 93px;
    border: solid #666;
    border-width: 0 3px 2px 1px;
    background: #fdfdfd;
    color: #555;
    font-family: "Open Sans", "Noto Sans", sans-serif;
    font-weight: 400;
    font-size: 15px;
    line-height: 21px;
  }
  .recorder-row {
    display: flex;
    height: 55px;
    padding: 0 50px 0 21px;
  }
  .rec {
    display: flex;
    flex-direction: column;
    align-items: center;
    justify-content: center;
    box-sizing: border-box;
    width: 62px;
    padding-top: 8px;
  }
  .rec svg {
    position: absolute;
    top: -14px;
  }
  .rec.on {
    background: #bfbfbf;
  }
  .rec.off {
    color: #aaa;
  }
  .timer {
    width: 74px;
  }
  .rec-sep {
    width: 1px;
    margin: 0 auto;
    background: #ccc;
  }
  .pin {
    position: absolute;
    right: 22px;
    top: 64px;
    line-height: 12px;
  }
  .pointer {
    position: absolute;
    left: 47px;
    top: 19px;
  }
</style>
